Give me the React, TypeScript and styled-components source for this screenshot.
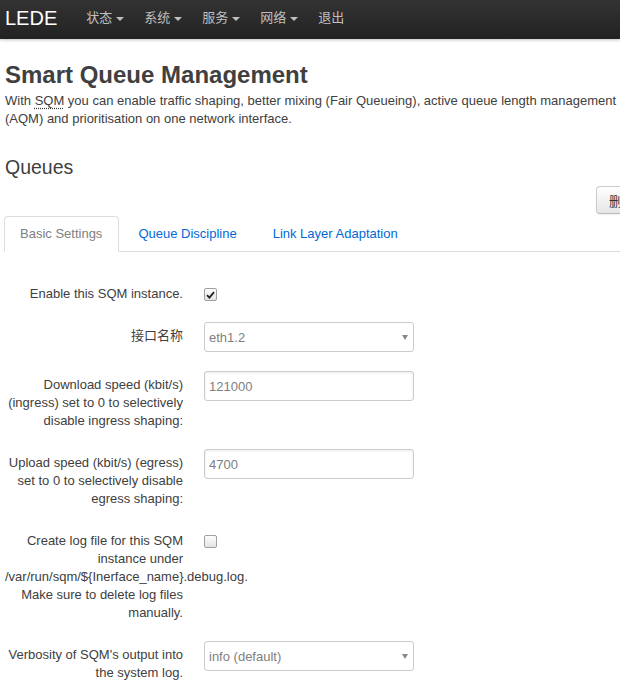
import styled, { createGlobalStyle } from "styled-components";

const GlobalStyle = createGlobalStyle`
  html, body {
    margin: 0;
    padding: 0;
    background: #fff;
    overflow: hidden;
  }
  body {
    font-family: "Liberation Sans", Arial, "Noto Sans CJK SC", sans-serif;
    font-size: 13px;
    line-height: 18px;
    color: #404040;
  }
`;

const navItems = [
  { label: "状态", caret: true },
  { label: "系统", caret: true },
  { label: "服务", caret: true },
  { label: "网络", caret: true },
  { label: "退出", caret: false },
];

const tabs = ["Basic Settings", "Queue Discipline", "Link Layer Adaptation"];

const TopBar = styled.div`
  height: 39px;
  display: flex;
  align-items: center;
  padding-left: 5px;
  background: linear-gradient(#333333, #222222);
  box-shadow: 0 1px 3px rgba(0, 0, 0, 0.25);
`;

const Brand = styled.a`
  color: #ffffff;
  font-size: 20px;
  line-height: 22px;
  padding-right: 19px;
  margin-top: -3px;
`;

const NavLink = styled.a`
  display: flex;
  align-items: center;
  padding: 0 10px;
  color: #bfbfbf;
  font-size: 13px;
  margin-top: -4px;
`;

const Caret = styled.span`
  width: 0;
  height: 0;
  margin-left: 4px;
  margin-top: 2px;
  border-left: 4px solid transparent;
  border-right: 4px solid transparent;
  border-top: 4px solid #bfbfbf;
`;

const Page = styled.div`
  width: 643px;
  padding: 0 5px;
`;

const Title = styled.h2`
  margin: 22px 0 0;
  font-size: 24px;
  line-height: 28px;
  font-weight: bold;
  color: #404040;
`;

const Intro = styled.p`
  margin: 3px 0 0;
`;

const Abbr = styled.abbr`
  text-decoration: underline dotted #404040;
  text-underline-offset: 3px;
`;

const Legend = styled.h3`
  margin: 28px 0 0;
  font-size: 19.5px;
  line-height: 22px;
  font-weight: normal;
  color: #404040;
`;

const ActionRow = styled.div`
  display: flex;
  justify-content: flex-end;
  margin-top: 8px;
`;

const Button = styled.button`
  height: 28px;
  padding: 0 12px;
  font-family: inherit;
  font-size: 13px;
  color: #333;
  border: 1px solid #ccc;
  border-bottom-color: #bbb;
  border-radius: 4px;
  background: linear-gradient(#ffffff, #e6e6e6);
  box-shadow: 0 1px 2px rgba(0, 0, 0, 0.05);
`;

const Tabs = styled.ul`
  display: flex;
  list-style: none;
  margin: 2px -5px 0 -1px;
  padding: 0;
  border-bottom: 1px solid #ddd;
`;

const Tab = styled.li<{ $active?: boolean }>`
  margin-right: 3px;
  margin-bottom: -1px;
  padding: 8px 16px 8px 15px;
  border: 1px solid ${(p) => (p.$active ? "#ddd" : "transparent")};
  border-bottom-color: ${(p) => (p.$active ? "#fff" : "transparent")};
  border-radius: 4px 4px 0 0;
  background: ${(p) => (p.$active ? "#fff" : "transparent")};
  color: ${(p) => (p.$active ? "#808080" : "#0069d6")};
`;

const Form = styled.div`
  margin-top: 28px;
  display: flex;
  flex-direction: column;
  gap: 19px;
`;

const Row = styled.div`
  display: flex;
  align-items: flex-start;
`;

const Label = styled.label`
  flex: 0 0 178px;
  width: 178px;
  min-width: 0;
  padding-top: 5px;
  margin-right: 21px;
  text-align: right;
`;

const Field = styled.div`
  position: relative;
  width: 210px;
  height: 30px;
`;

const TextBox = styled.input`
  box-sizing: border-box;
  width: 100%;
  height: 100%;
  padding: 0 4px;
  font-family: inherit;
  font-size: 13px;
  color: #808080;
  border: 1px solid #ccc;
  border-radius: 3px;
  box-shadow: inset 0 1px 3px rgba(0, 0, 0, 0.08);
  outline: none;
`;

const SelectBox = styled.select`
  box-sizing: border-box;
  width: 100%;
  height: 100%;
  padding: 0 4px;
  font-family: inherit;
  font-size: 13px;
  color: #808080;
  background: #fff;
  border: 1px solid #ccc;
  border-radius: 3px;
  appearance: none;
  outline: none;
`;

const SelectArrow = styled.span`
  position: absolute;
  right: 6px;
  top: 13px;
  width: 0;
  height: 0;
  border-left: 3px solid transparent;
  border-right: 3px solid transparent;
  border-top: 5px solid #888;
  pointer-events: none;
`;

const Check = styled.span`
  box-sizing: border-box;
  display: flex;
  flex: 0 0 13px;
  align-items: center;
  justify-content: center;
  width: 13px;
  height: 13px;
  margin-top: 8px;
  border: 1px solid #a0a0a0;
  border-radius: 2px;
  background: linear-gradient(#fdfdfd, #e4e4e4);
`;

const CheckBox = ({ checked }: { checked?: boolean }) => (
  <Check>
    {checked && (
      <svg width="9" height="8" viewBox="0 0 9 8">
        <path d="M1 4.2 L3.4 6.6 L8 1.2" fill="none" stroke="#222" strokeWidth="1.8" />
      </svg>
    )}
  </Check>
);

const Select = ({ value }: { value: string }) => (
  <Field>
    <SelectBox defaultValue={value}>
      <option>{value}</option>
    </SelectBox>
    <SelectArrow />
  </Field>
);

const Input = ({ value }: { value: string }) => (
  <Field>
    <TextBox defaultValue={value} />
  </Field>
);

const App = () => (
  <>
    <GlobalStyle />
    <TopBar>
      <Brand>LEDE</Brand>
      {navItems.map((item) => (
        <NavLink key={item.label}>
          {item.label}
          {item.caret && <Caret />}
        </NavLink>
      ))}
    </TopBar>
    <Page>
      <Title>Smart Queue Management</Title>
      <Intro>
        With <Abbr title="Smart Queue Management">SQM</Abbr> you can enable traffic shaping,
        better mixing (Fair Queueing), active queue length management (AQM) and prioritisation on
        one network interface.
      </Intro>
      <Legend>Queues</Legend>
      <ActionRow>
        <Button>删除</Button>
      </ActionRow>
      <Tabs>
        {tabs.map((t, i) => (
          <Tab key={t} $active={i === 0}>
            {t}
          </Tab>
        ))}
      </Tabs>
      <Form>
        <Row>
          <Label>Enable this SQM instance.</Label>
          <CheckBox checked />
        </Row>
        <Row>
          <Label>接口名称</Label>
          <Select value="eth1.2" />
        </Row>
        <Row>
          <Label>
            Download speed (kbit/s) (ingress) set to 0 to selectively disable ingress shaping:
          </Label>
          <Input value="121000" />
        </Row>
        <Row>
          <Label>Upload speed (kbit/s) (egress) set to 0 to selectively disable egress shaping:</Label>
          <Input value="4700" />
        </Row>
        <Row>
          <Label>
            Create log file for this SQM instance under /var/run/sqm/$&#123;Inerface_name&#125;.debug.log.
            Make sure to delete log files manually.
          </Label>
          <CheckBox />
        </Row>
        <Row>
          <Label>Verbosity of SQM's output into the system log.</Label>
          <Select value="info (default)" />
        </Row>
      </Form>
    </Page>
  </>
);

export default App;
